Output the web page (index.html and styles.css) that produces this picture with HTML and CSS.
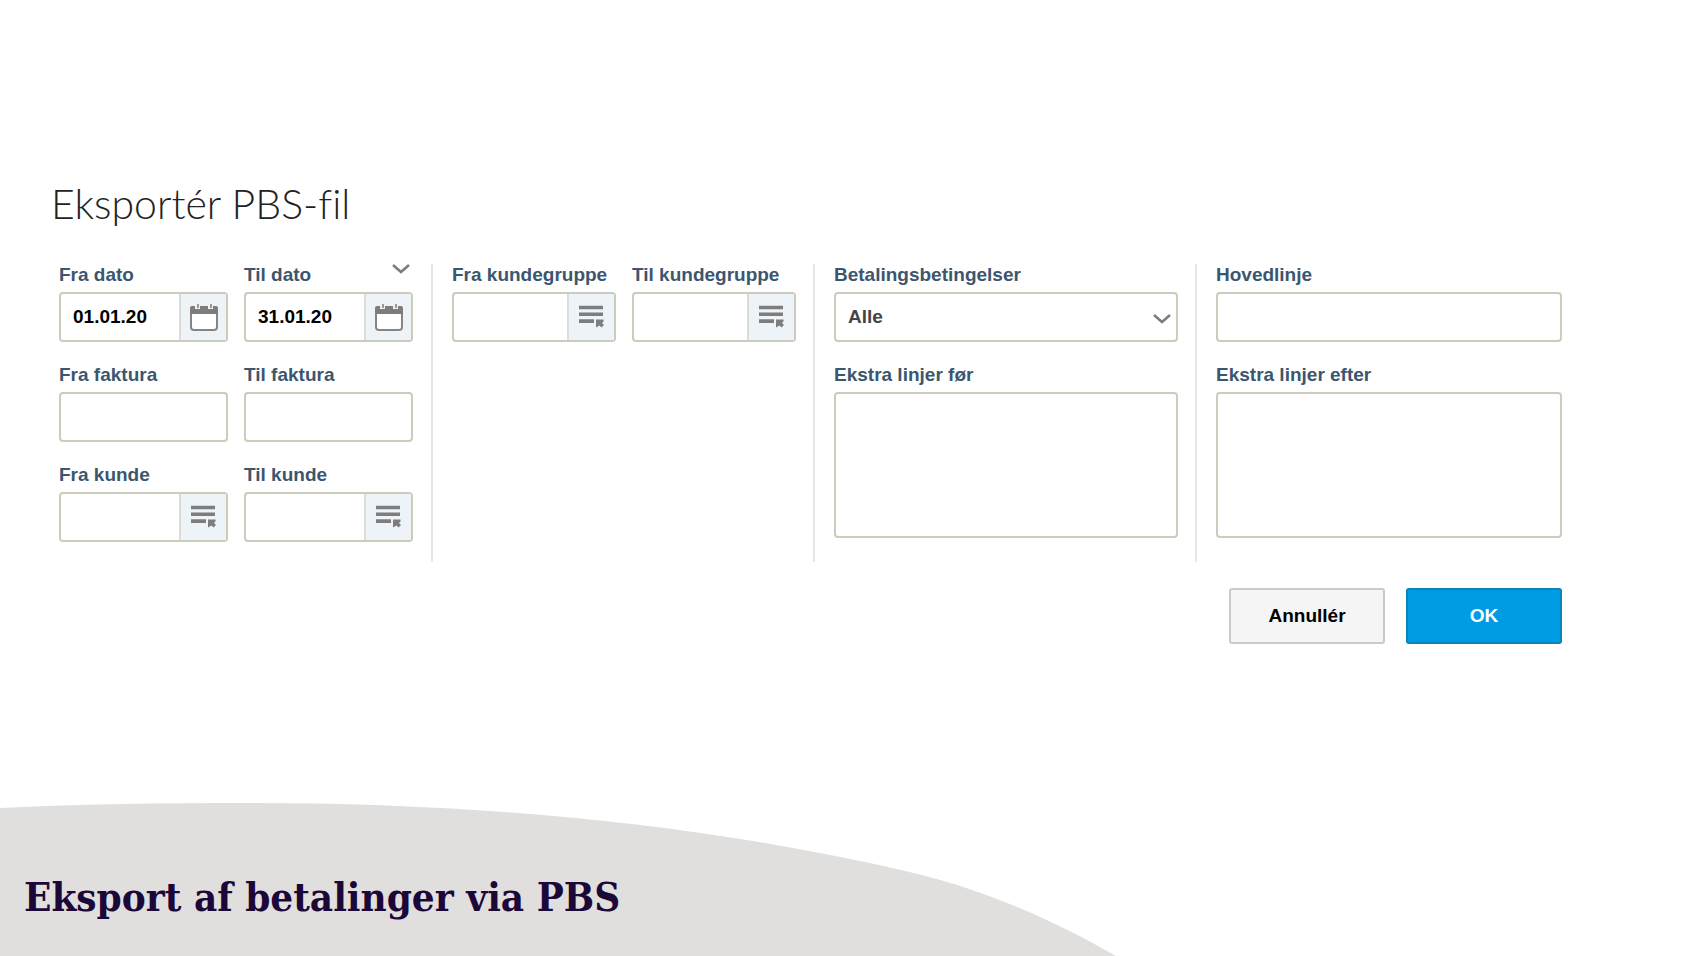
FILE: index.html
```
<!DOCTYPE html>
<html lang="da">
<head>
    <meta charset="UTF-8">
    <meta name="viewport" content="width=device-width, initial-scale=1.0">
    <title>Eksportér PBS-fil</title>
    <link rel="stylesheet" href="styles.css">
</head>
<body>
    <!-- shared icons -->
    <svg class="icon-defs" aria-hidden="true">
        <symbol id="icon-calendar" viewBox="0 0 28 28">
            <rect x="1" y="5" width="26" height="22" rx="3" fill="#fff" stroke="#858585" stroke-width="2"/>
            <path d="M0 11V5a2 2 0 0 1 2-2h24a2 2 0 0 1 2 2v6z" fill="#7d7d7d"/>
            <path d="M5 1h5v5h-5zM18 1h5v5h-5z" fill="#edf3f6"/>
            <path d="M7 1h2v4h-2zM20 1h2v4h-2z" fill="#999"/>
        </symbol>
        <symbol id="icon-list" viewBox="0 0 28 28">
            <path d="M1 2.7h24v3.6H1zM1 9.5h24v3.6H1zM1 16.3h15v3.6H1z" fill="#7d7d7d"/>
            <path d="M18 16.5h7.5v2l-1.5 1.5 2 2-2.5 2.500-2-2-3.500 2z" fill="#7d7d7d"/>
        </symbol>
        <symbol id="icon-chevron" viewBox="0 0 18 10">
            <path d="M1 1l8 7 8-7" fill="none" stroke="#7d7d7d" stroke-width="2.600"/>
        </symbol>
    </svg>

    <main class="page">
        <h1>Eksportér PBS-fil</h1>
        <form>
            <div class="columns">
                <div class="column column-first">
                    <div class="form-row">
                        <div class="form-group">
                            <label for="date_from">Fra dato</label>
                            <div class="input-box">
                                <input type="text" id="date_from" value="01.01.20">
                                <button type="button" class="addon" aria-label="Vælg fra dato"><svg><use href="#icon-calendar"/></svg></button>
                            </div>
                        </div>
                        <div class="form-group">
                            <label for="date_to">Til dato</label>
                            <div class="input-box">
                                <input type="text" id="date_to" value="31.01.20">
                                <button type="button" class="addon" aria-label="Vælg til dato"><svg><use href="#icon-calendar"/></svg></button>
                            </div>
                            <button type="button" class="period-btn" aria-label="Vælg periode"><svg><use href="#icon-chevron"/></svg></button>
                        </div>
                    </div>
                    <div class="form-row">
                        <div class="form-group">
                            <label for="invoice_from">Fra faktura</label>
                            <div class="input-box"><input type="text" id="invoice_from"></div>
                        </div>
                        <div class="form-group">
                            <label for="invoice_to">Til faktura</label>
                            <div class="input-box"><input type="text" id="invoice_to"></div>
                        </div>
                    </div>
                    <div class="form-row">
                        <div class="form-group">
                            <label for="customer_from">Fra kunde</label>
                            <div class="input-box">
                                <input type="text" id="customer_from">
                                <button type="button" class="addon" aria-label="Vælg fra kunde"><svg><use href="#icon-list"/></svg></button>
                            </div>
                        </div>
                        <div class="form-group">
                            <label for="customer_to">Til kunde</label>
                            <div class="input-box">
                                <input type="text" id="customer_to">
                                <button type="button" class="addon" aria-label="Vælg til kunde"><svg><use href="#icon-list"/></svg></button>
                            </div>
                        </div>
                    </div>
                </div>

                <div class="column">
                    <div class="form-row">
                        <div class="form-group">
                            <label for="group_from">Fra kundegruppe</label>
                            <div class="input-box">
                                <input type="text" id="group_from">
                                <button type="button" class="addon" aria-label="Vælg fra kundegruppe"><svg><use href="#icon-list"/></svg></button>
                            </div>
                        </div>
                        <div class="form-group">
                            <label for="group_to">Til kundegruppe</label>
                            <div class="input-box">
                                <input type="text" id="group_to">
                                <button type="button" class="addon" aria-label="Vælg til kundegruppe"><svg><use href="#icon-list"/></svg></button>
                            </div>
                        </div>
                    </div>
                </div>

                <div class="column">
                    <div class="form-group">
                        <label for="terms">Betalingsbetingelser</label>
                        <div class="input-box">
                            <select id="terms">
                                <option>Alle</option>
                            </select>
                            <svg class="select-arrow"><use href="#icon-chevron"/></svg>
                        </div>
                    </div>
                    <div class="form-group">
                        <label for="lines_before">Ekstra linjer før</label>
                        <textarea id="lines_before"></textarea>
                    </div>
                </div>

                <div class="column">
                    <div class="form-group">
                        <label for="main_line">Hovedlinje</label>
                        <div class="input-box"><input type="text" id="main_line"></div>
                    </div>
                    <div class="form-group">
                        <label for="lines_after">Ekstra linjer efter</label>
                        <textarea id="lines_after"></textarea>
                    </div>
                </div>
            </div>

            <div class="actions">
                <button type="button" class="btn">Annullér</button>
                <button type="submit" class="btn btn-primary">OK</button>
            </div>
        </form>
    </main>

    <footer class="banner">
        <svg class="banner-shape" viewBox="0 0 1700 154" preserveAspectRatio="none" aria-hidden="true">
            <path d="M0 6C80 2 160 1 250 1C470 1 700 20 918 72C990 90 1055 119 1116 154H0z" fill="#e0dfdd"/>
        </svg>
        <h2>Eksport af betalinger via PBS</h2>
    </footer>
</body>
</html>
```
FILE: styles.css
```
* {
    box-sizing: border-box;
}
body {
    font-family: "Liberation Sans", Arial, sans-serif;
    margin: 0;
    min-height: 100vh;
    display: flex;
    flex-direction: column;
    justify-content: space-between;
    background: #fff;
    color: #000;
}
.icon-defs {
    position: absolute;
    width: 0;
    height: 0;
}
.page {
    padding: 180px 121px 40px 51px;
}
h1 {
    font-family: Lato, sans-serif;
    font-weight: 300;
    font-size: 41px;
    font-variant-ligatures: none;
    line-height: 48px;
    margin: 0 0 36px;
    color: #222;
}
.columns {
    display: grid;
    grid-template-columns: repeat(4, 1fr);
}
.column {
    display: flex;
    flex-direction: column;
    gap: 22px;
    padding: 0 17px 20px 19px;
    border-right: 2px solid #e4e7e7;
}
.column-first {
    padding-left: 8px;
    padding-right: 18px;
}
.column:last-child {
    border-right: none;
}
.form-row {
    display: grid;
    grid-template-columns: 1fr 1fr;
    gap: 16px;
}
.form-group {
    position: relative;
    min-width: 0;
}
label {
    display: block;
    font-size: 19px;
    font-weight: bold;
    line-height: 22px;
    margin-bottom: 6px;
    white-space: nowrap;
    color: #3b566e;
}
.input-box,
textarea {
    width: 100%;
    border: 2px solid #cbcdbb;
    border-radius: 4px;
    background: #fff;
}
.input-box {
    position: relative;
    display: flex;
    height: 50px;
}
input,
select {
    flex: 1;
    min-width: 0;
    width: 100%;
    padding: 0 12px;
    border: none;
    background: none;
    font-family: inherit;
    font-size: 19px;
    font-weight: bold;
    color: #000;
}
select {
    appearance: none;
    padding-bottom: 2px;
    color: #444;
}
textarea {
    display: block;
    height: 146px;
    padding: 12px;
    resize: none;
    font: inherit;
}
button {
    font-family: inherit;
    cursor: pointer;
}
.addon {
    width: 47px;
    padding: 0;
    display: flex;
    justify-content: center;
    align-items: center;
    border: none;
    border-left: 2px solid #dadddd;
    background: #edf3f6;
}
.addon svg {
    width: 28px;
    height: 28px;
}
.period-btn {
    position: absolute;
    top: 0;
    right: 3px;
    padding: 0;
    border: none;
    background: none;
}
.period-btn svg,
.select-arrow {
    display: block;
    width: 18px;
    height: 10px;
}
.select-arrow {
    position: absolute;
    right: 5px;
    top: 20px;
    pointer-events: none;
}
.actions {
    display: flex;
    justify-content: flex-end;
    gap: 21px;
    padding: 26px 17px 0 0;
}
.btn {
    width: 156px;
    height: 56px;
    border: 2px solid #cacaca;
    border-radius: 3px;
    background: #f5f5f5;
    font-size: 19px;
    font-weight: bold;
    color: #000;
}
.btn-primary {
    border-color: #0886b8;
    background: #009ce3;
    color: #fff;
}
.banner {
    position: relative;
    height: 154px;
    padding: 70px 24px 0;
}
.banner-shape {
    position: absolute;
    left: 0;
    top: 0;
    width: 100%;
    height: 100%;
}
h2 {
    position: relative;
    margin: 0;
    font-family: "Roboto Slab", "DejaVu Serif Condensed", "DejaVu Serif", serif;
    font-size: 40px;
    line-height: 50px;
    color: #1b0738;
}
```
